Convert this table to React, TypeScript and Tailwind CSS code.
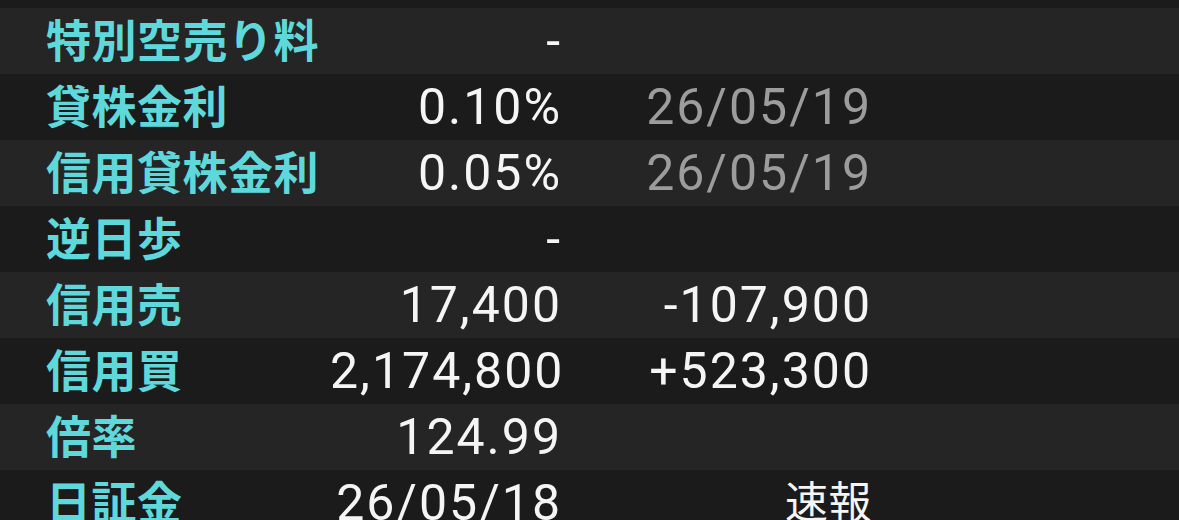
const rows: { label: string; value: string; extra?: string; extraTone?: "gray" | "white" | "jp" }[] = [
  { label: "", value: "" },
  { label: "特別空売り料", value: "-" },
  { label: "貸株金利", value: "0.10%", extra: "26/05/19", extraTone: "gray" },
  { label: "信用貸株金利", value: "0.05%", extra: "26/05/19", extraTone: "gray" },
  { label: "逆日歩", value: "-" },
  { label: "信用売", value: "17,400", extra: "-107,900", extraTone: "white" },
  { label: "信用買", value: "2,174,800", extra: "+523,300", extraTone: "white" },
  { label: "倍率", value: "124.99" },
  { label: "日証金", value: "26/05/18", extra: "速報", extraTone: "jp" },
];

export default function App() {
  return (
    <div className="w-[1179px] h-[520px] overflow-hidden bg-[#1b1b1b]">
      <div className="-mt-[58px]">
        {rows.map((r, i) => (
          <div
            key={i}
            className={`flex items-center h-[66px] ${i % 2 === 1 ? "bg-[#252525]" : "bg-[#1b1b1b]"}`}
          >
            <div className="w-[330px] pl-[46px] pb-[5px] flex-none text-[45px] tracking-[0.5px] font-bold leading-none text-[#5fd8db] font-['Noto_Sans_CJK_JP',sans-serif] whitespace-nowrap">
              {r.label}
            </div>
            <div className="w-[232px] flex-none text-right text-[50px] tracking-[2px] leading-none text-[#f5f5f5] font-['Roboto','Noto_Sans_CJK_JP',sans-serif] whitespace-nowrap">
              {r.value}
            </div>
            <div
              className={`w-[310px] flex-none text-right leading-none whitespace-nowrap ${
                r.extraTone === "gray"
                  ? "text-[50px] tracking-[2px] text-[#9c9c9c] font-['Roboto',sans-serif]"
                  : r.extraTone === "jp"
                  ? "text-[43px] tracking-[0.5px] pb-[8px] text-[#f5f5f5] font-['Noto_Sans_CJK_JP',sans-serif]"
                  : "text-[50px] tracking-[2px] text-[#f5f5f5] font-['Roboto',sans-serif]"
              }`}
            >
              {r.extra ?? ""}
            </div>
          </div>
        ))}
      </div>
    </div>
  );
}
